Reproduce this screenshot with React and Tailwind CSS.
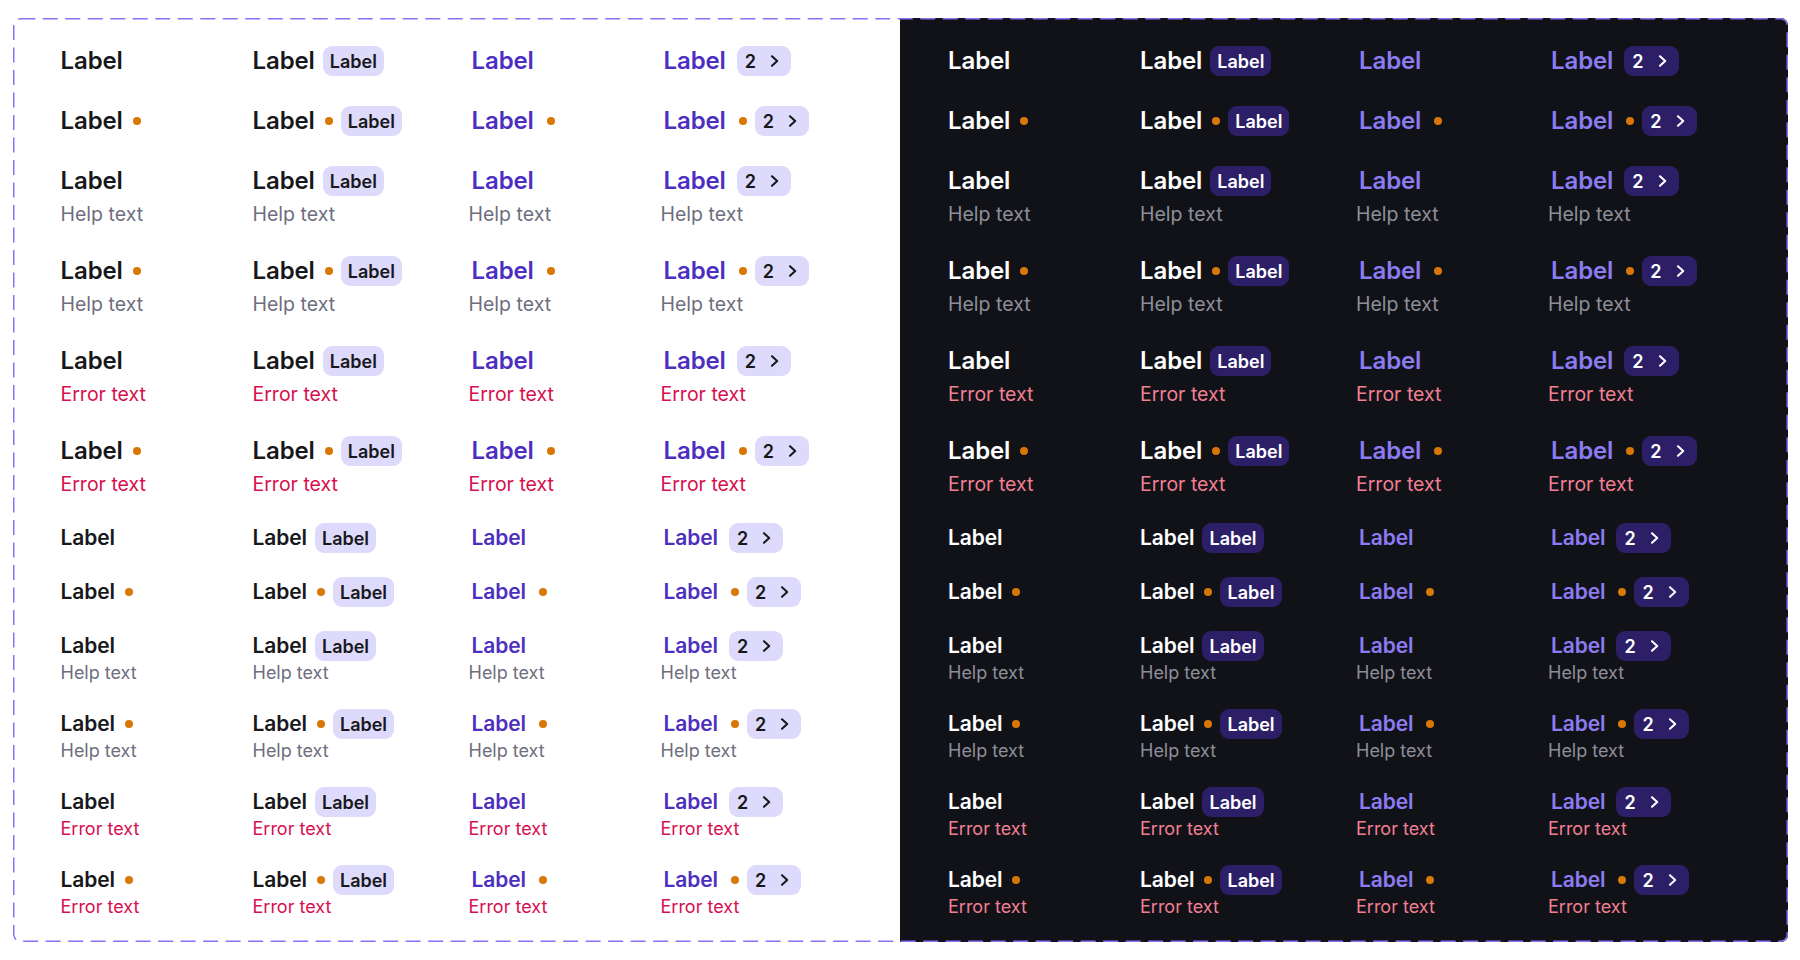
const rows = [
  { dot: false, sub: null },
  { dot: true, sub: null },
  { dot: false, sub: "help" },
  { dot: true, sub: "help" },
  { dot: false, sub: "error" },
  { dot: true, sub: "error" },
];

const themes = {
  light: {
    bg: "bg-white",
    label: "text-[#18181b]",
    link: "text-[#4c2fc0]",
    help: "text-[#6e6e7e]",
    error: "text-[#d7104f]",
    badge: "bg-[#dddafc] text-[#18181b]",
  },
  dark: {
    bg: "bg-[#111218]",
    label: "text-white",
    link: "text-[#8c7cf2]",
    help: "text-[#8e8e9a]",
    error: "text-[#f07f93]",
    badge: "bg-[#2c1f68] text-white",
  },
};

const sizes = {
  lg: { row: "h-[36px]", label: "text-[24px] leading-[36px]", sub: "text-[19.5px] leading-[30px]" },
  sm: { row: "h-[30px]", label: "text-[21px] leading-[30px]", sub: "text-[18px] leading-[24px]" },
};

function Chevron() {
  return (
    <svg width="9" height="12" viewBox="0 0 9 12" fill="none" className="ml-[14px]">
      <path
        d="M2 1.3 L7.2 6 L2 10.7"
        stroke="currentColor"
        strokeWidth="2.1"
        strokeLinecap="round"
        strokeLinejoin="round"
      />
    </svg>
  );
}

function Field({ theme, size, link, badge, dot, sub }) {
  const t = themes[theme];
  const s = sizes[size];
  return (
    <div className="flex flex-col">
      <div className={`flex items-center ${s.row}`}>
        <span className={`font-semibold tracking-[-0.1px] ${s.label} ${link ? `${t.link} px-[3px]` : t.label}`}>
          Label
        </span>
        {dot && <span className="ml-[10px] w-2 h-2 rounded-full bg-[#d97706]" />}
        {badge === "label" && (
          <span className={`ml-2 flex items-center h-[30px] px-[7px] rounded-[9px] text-[18px] font-semibold ${t.badge}`}>
            Label
          </span>
        )}
        {badge === "count" && (
          <span className={`ml-2 flex items-center h-[30px] pl-[8px] pr-[12px] rounded-[9px] text-[18px] font-semibold ${t.badge}`}>
            2
            <Chevron />
          </span>
        )}
      </div>
      {sub === "help" && <span className={`${s.sub} ${t.help}`}>Help text</span>}
      {sub === "error" && <span className={`${s.sub} ${t.error}`}>Error text</span>}
    </div>
  );
}

function Panel({ theme }) {
  const t = themes[theme];
  return (
    <div className={`${t.bg} pl-[48px] pt-[25px] pb-[23px] grid grid-cols-[192px_216px_192px_1fr] gap-y-[24px] content-start`}>
      {["lg", "sm"].map((size) =>
        rows.map((r, i) => (
          <div key={size + i} className="contents">
            <Field theme={theme} size={size} dot={r.dot} sub={r.sub} />
            <Field theme={theme} size={size} dot={r.dot} sub={r.sub} badge="label" />
            <Field theme={theme} size={size} dot={r.dot} sub={r.sub} link />
            <Field theme={theme} size={size} dot={r.dot} sub={r.sub} link badge="count" />
          </div>
        ))
      )}
    </div>
  );
}

export default function App() {
  return (
    <div className="min-h-screen bg-white pt-[18px] pl-[12.5px] font-['Inter',sans-serif]">
      <div className="relative w-[1775px] h-[924px] rounded-[7px] overflow-hidden grid grid-cols-2">
        <Panel theme="light" />
        <Panel theme="dark" />
        <svg className="absolute inset-0 pointer-events-none" width="1775" height="924">
          <rect
            x="0.75"
            y="0.75"
            width="1773.5"
            height="922.5"
            rx="6.5"
            fill="none"
            stroke="#8b6ff7"
            strokeWidth="1.5"
            strokeDasharray="15 7.5"
          />
        </svg>
      </div>
    </div>
  );
}
